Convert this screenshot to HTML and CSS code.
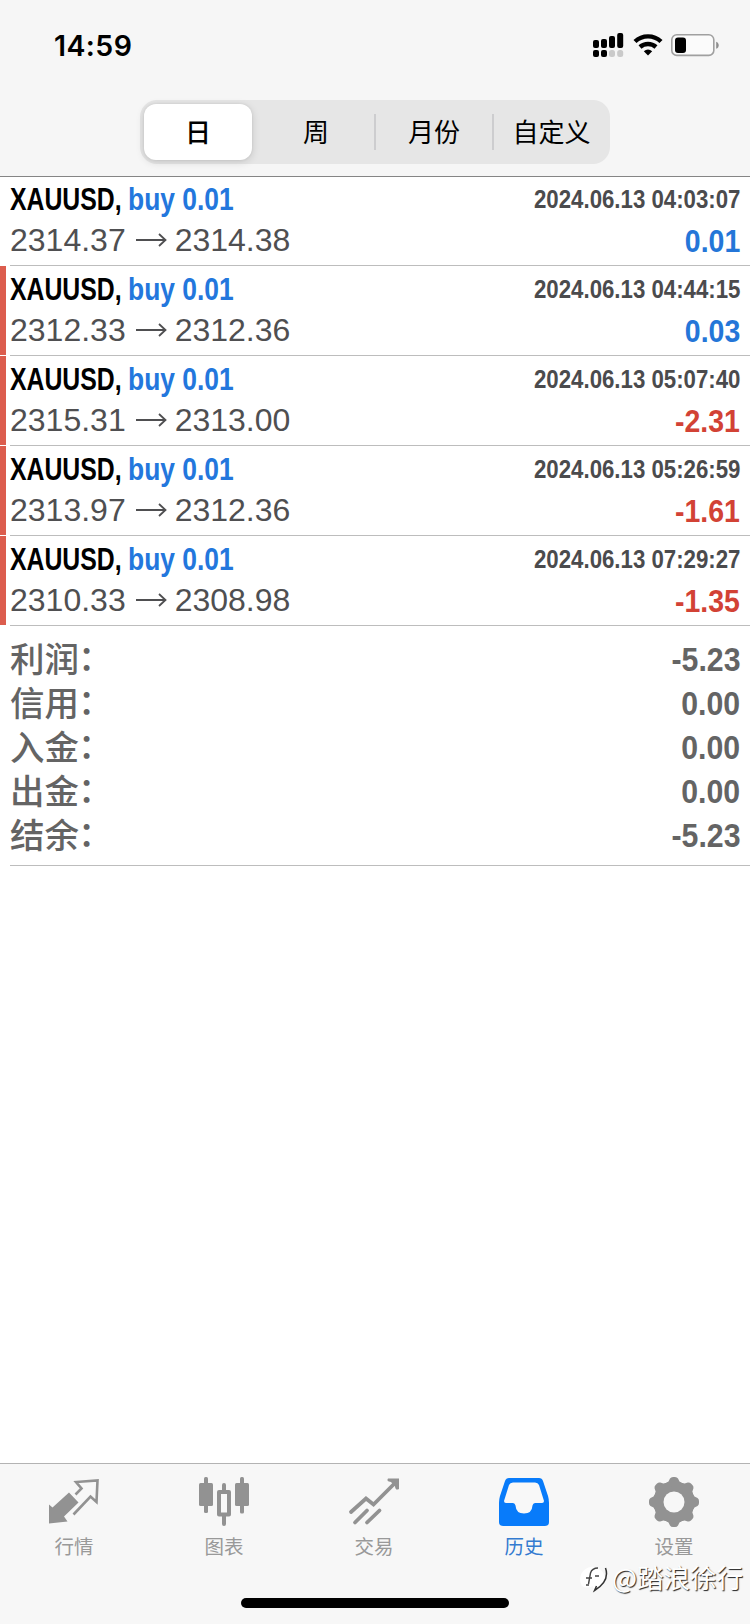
FILE: index.html
```html
<!DOCTYPE html>
<html lang="zh-CN">
<head>
<meta charset="utf-8">
<title>历史</title>
<link rel="stylesheet" href="styles.css">
</head>
<body>
<div class="app">
  <header class="header">
    <div class="status">
      <span class="time">14:59</span>
      <svg class="indicators" width="128" height="26" viewBox="0 0 128 26">
        <g fill="#000">
          <rect x="1" y="8" width="6" height="8" rx="2"/>
          <rect x="9" y="7" width="6" height="9" rx="2"/>
          <rect x="17" y="4" width="6" height="12" rx="2"/>
          <rect x="25.2" y="1" width="6" height="15" rx="2"/>
          <rect x="1" y="18" width="6" height="7" rx="2"/>
          <rect x="9" y="18" width="6" height="7" rx="2"/>
        </g>
        <g fill="#cacaca">
          <rect x="17" y="18" width="6" height="7" rx="2.5"/>
          <rect x="25.2" y="18" width="6" height="7" rx="2.5"/>
        </g>
        <g fill="none" stroke="#000" stroke-width="4.4">
          <path d="M43 9.5a19 19 0 0 1 26 0"/>
          <path d="M48 15a12 12 0 0 1 16 0"/>
        </g>
        <path d="M51.8 19.3a6.500 6.500 0 0 1 8.400 0L56 23.500z" fill="#000"/>
        <rect x="79.800" y="2.800" width="42" height="20.600" rx="5" fill="#fbfbfb" stroke="#a0a0a0" stroke-width="1.600"/>
        <rect x="83" y="5.400" width="11" height="15.600" rx="3" fill="#000"/>
        <path d="M124.200 9.800c3.400 1 3.400 6 0 7z" fill="#8e8e8e"/>
      </svg>
    </div>
    <nav class="segments">
      <span class="segment active">日</span>
      <span class="segment">周</span>
      <span class="segment divided">月份</span>
      <span class="segment divided">自定义</span>
    </nav>
  </header>

  <main class="content">
    <section class="deal plain">
      <div class="line"><span class="title"><b class="symbol">XAUUSD,</b><b class="side">buy 0.01</b></span><b class="date">2024.06.13 04:03:07</b></div>
      <div class="line second"><span class="prices">2314.37<svg class="arrow" viewBox="0 0 31 14"><path d="M0 7h29M23 1l6.5 6-6.5 6"/></svg>2314.38</span><b class="value gain">0.01</b></div>
    </section>
    <section class="deal">
      <div class="line"><span class="title"><b class="symbol">XAUUSD,</b><b class="side">buy 0.01</b></span><b class="date">2024.06.13 04:44:15</b></div>
      <div class="line second"><span class="prices">2312.33<svg class="arrow" viewBox="0 0 31 14"><path d="M0 7h29M23 1l6.5 6-6.5 6"/></svg>2312.36</span><b class="value gain">0.03</b></div>
    </section>
    <section class="deal">
      <div class="line"><span class="title"><b class="symbol">XAUUSD,</b><b class="side">buy 0.01</b></span><b class="date">2024.06.13 05:07:40</b></div>
      <div class="line second"><span class="prices">2315.31<svg class="arrow" viewBox="0 0 31 14"><path d="M0 7h29M23 1l6.5 6-6.5 6"/></svg>2313.00</span><b class="value loss">-2.31</b></div>
    </section>
    <section class="deal">
      <div class="line"><span class="title"><b class="symbol">XAUUSD,</b><b class="side">buy 0.01</b></span><b class="date">2024.06.13 05:26:59</b></div>
      <div class="line second"><span class="prices">2313.97<svg class="arrow" viewBox="0 0 31 14"><path d="M0 7h29M23 1l6.5 6-6.5 6"/></svg>2312.36</span><b class="value loss">-1.61</b></div>
    </section>
    <section class="deal">
      <div class="line"><span class="title"><b class="symbol">XAUUSD,</b><b class="side">buy 0.01</b></span><b class="date">2024.06.13 07:29:27</b></div>
      <div class="line second"><span class="prices">2310.33<svg class="arrow" viewBox="0 0 31 14"><path d="M0 7h29M23 1l6.5 6-6.5 6"/></svg>2308.98</span><b class="value loss">-1.35</b></div>
    </section>
    <section class="summary">
      <div class="total"><span class="label">利润<i class="colon">：</i></span><b class="amount">-5.23</b></div>
      <div class="total"><span class="label">信用<i class="colon">：</i></span><b class="amount">0.00</b></div>
      <div class="total"><span class="label">入金<i class="colon">：</i></span><b class="amount">0.00</b></div>
      <div class="total"><span class="label">出金<i class="colon">：</i></span><b class="amount">0.00</b></div>
      <div class="total"><span class="label">结余<i class="colon">：</i></span><b class="amount">-5.23</b></div>
    </section>
  </main>

  <footer class="footer">
    <nav class="tabs">
      <span class="tab">
        <svg class="icon" viewBox="0 0 50 50">
          <path d="M0 27.5 3.5 30.5 20 15.5 29.5 25.5 15 39.5 18.5 44.5 0 46.5z" fill="#929292"/>
          <path d="M26.5 17.5 32.5 11.5 27 5 48.5 3.5 47.5 25 41.5 19.5 24.5 37.5" fill="none" stroke="#929292" stroke-width="2.6"/>
        </svg>
        行情
      </span>
      <span class="tab">
        <svg class="icon" viewBox="0 0 50 50" fill="#929292">
          <rect x="5" y="0" width="4" height="36" rx="1.5"/><rect x="0" y="6" width="14" height="23" rx="1.5"/>
          <rect x="41" y="0" width="4" height="36.5" rx="1.5"/><rect x="36" y="6" width="14" height="23" rx="1.5"/>
          <path d="M23 14V8a2 2 0 0 1 4 0v6zM23 38h4v9a2 2 0 0 1-4 0z"/>
          <rect x="20" y="15" width="10" height="22.5" fill="#f9f9f9" stroke="#929292" stroke-width="4" stroke-linejoin="round"/>
        </svg>
        图表
      </span>
      <span class="tab">
        <svg class="icon" viewBox="0 0 50 50">
          <path d="M2 35 17 21.5 24.5 27.5 46 6M6 45.5 18 33.5M18 45.5 30.5 33.5" fill="none" stroke="#929292" stroke-width="3.8" stroke-linecap="round"/>
          <path d="M39 1.5H50V12Q46.5 14 46 9.5L42 5Q37 4.5 39 1.5z" fill="#929292"/>
        </svg>
        交易
      </span>
      <span class="tab current">
        <svg class="icon" viewBox="0 0 50 50">
          <path d="M10 1H40Q43 1 44 4L49 19Q50 22 50 26V45Q50 49 46 49H4Q0 49 0 45V26Q0 22 1 19L6 4Q7 1 10 1z" fill="#087bfa"/>
          <path d="M14 5.5H36Q39 5.5 40 8L45 24Q45 26 43 26H36Q34 26 33.5 28.5Q33 36.500 25 36.500Q17 36.500 16.500 28.500Q16 26 14 26H7Q5 26 5 24L10 8Q11 5.500 14 5.500z" fill="#f8f8f8"/>
        </svg>
        历史
      </span>
      <span class="tab">
        <svg class="icon" viewBox="0 0 50 50">
          <g fill="#929292">
            <circle cx="25" cy="25" r="20.5"/>
            <path id="tooth" d="M15.500 7 19.500 4.500 21 1.500Q22 0 24 0H26Q28 0 29 1.500L30.500 4.500 34.500 7V43L30.500 45.500 29 48.500Q28 50 26 50H24Q22 50 21 48.500L19.500 45.500 15.500 43z"/>
            <use href="#tooth" transform="rotate(45 25 25)"/>
            <use href="#tooth" transform="rotate(90 25 25)"/>
            <use href="#tooth" transform="rotate(135 25 25)"/>
          </g>
          <circle cx="25" cy="25" r="10.5" fill="#f7f7f7"/>
        </svg>
        设置
      </span>
    </nav>
    <div class="home"></div>
    <div class="watermark">
      <svg class="mark" width="28" height="32" viewBox="0 0 28 32">
        <path d="M2 25A12.500 12.500 0 1 1 25 17Q24 25 14 29L13 25Q7 28 2 25z" fill="#fff"/>
        <path d="M25.500 7Q30 20 14.500 29.500l2-4.500" fill="none" stroke="#333" stroke-width="1.500"/>
        <path d="M8.500 23 10.500 12Q12 7 18 7M6 17h6M15 15h4M6 24h3" fill="none" stroke="#444" stroke-width="1.400"/>
      </svg>
      <span>@踏浪徐行</span>
    </div>
  </footer>
</div>
</body>
</html>
```
FILE: styles.css
```css
* {
  box-sizing: border-box;
}

body {
  margin: 0;
  background: #fff;
  font-family: "Liberation Sans", "Noto Sans CJK SC", sans-serif;
}

.app {
  display: flex;
  flex-direction: column;
  width: 750px;
  height: 1624px;
  overflow: hidden;
}

.header {
  height: 177px;
  background: #f6f6f6;
  border-bottom: 1px solid #858585;
}

.status {
  display: flex;
  justify-content: space-between;
  height: 100px;
  padding: 29px 30px 0 54px;
}

.time {
  font: 600 28.5px/34px Inter, sans-serif;
  letter-spacing: 0.4px;
}

.indicators {
  margin-top: 3px;
}

.segments {
  display: grid;
  grid-template-columns: 117px 118px 118px 117px;
  width: 470px;
  height: 64px;
  margin-left: 140px;
  border-radius: 17px;
  background: #e6e6e6;
  font: 400 26px/62px "Noto Sans CJK SC", sans-serif;
  text-align: center;
}

.segment {
  display: block;
  height: 64px;
}

.segment.active {
  width: 108px;
  height: 56px;
  margin: 4px 0 0 4px;
  border-radius: 12px;
  background: #fff;
  box-shadow: 0 2px 8px rgba(0, 0, 0, 0.14), 0 0 3px rgba(0, 0, 0, 0.08);
  line-height: 54px;
  font-weight: 500;
}

.segment.divided {
  margin-left: -1px;
  padding-left: 1px;
  background: linear-gradient(#cdcdcf, #cdcdcf) 0 14px / 2px 36px no-repeat;
}

.content {
  flex: 1;
}

.deal {
  height: 90px;
  padding: 4px 10px 0;
  background:
    linear-gradient(#bdbdbd, #bdbdbd) 10px 100% / 740px 1px no-repeat,
    linear-gradient(#dc5d4e, #dc5d4e) 0 0 / 6px 89px no-repeat;
}

.deal.plain {
  height: 89px;
  padding-top: 3px;
  background: linear-gradient(#bdbdbd, #bdbdbd) 10px 100% / 740px 1px no-repeat;
}

.line {
  display: flex;
  justify-content: space-between;
  height: 40px;
  line-height: 38px;
  white-space: nowrap;
}

.title {
  display: flex;
  font-size: 32px;
}

.symbol {
  width: 118px;
  transform: scaleX(0.775);
  transform-origin: 0 50%;
}

.side {
  color: #2377dd;
  transform: scaleX(0.825);
  transform-origin: 0 50%;
}

.date {
  color: #4b4b4d;
  font-size: 26px;
  transform: scaleX(0.855);
  transform-origin: 100% 50%;
}

.prices {
  display: flex;
  align-items: center;
  height: 39px;
  color: #4f4f51;
  font-size: 32px;
}

.arrow {
  width: 31px;
  height: 14px;
  margin: 0 8px 0 10px;
  fill: none;
  stroke: #4f4f51;
  stroke-width: 1.8;
}

.value {
  padding-top: 2px;
  font-size: 32px;
  transform: scaleX(0.89);
  transform-origin: 100% 50%;
}

.gain {
  color: #2476d8;
}

.loss {
  color: #d24235;
}

.summary {
  height: 240px;
  padding: 11px 10px 0;
  background: linear-gradient(#bdbdbd, #bdbdbd) 10px 100% / 740px 1px no-repeat;
  color: #646464;
}

.total {
  display: flex;
  justify-content: space-between;
  height: 44px;
  line-height: 44px;
}

.label {
  display: flex;
  font: 500 34.5px/40px "Noto Sans CJK SC", sans-serif;
}

.colon {
  margin-left: -1px;
  font-style: normal;
  line-height: 36px;
}

.amount {
  font-size: 34px;
  transform: scaleX(0.89);
  transform-origin: 100% 50%;
}

.footer {
  position: relative;
  height: 161px;
  border-top: 1px solid #b3b3b3;
  background: #f7f7f7;
}

.tabs {
  display: grid;
  grid-template-columns: repeat(5, 150px);
  width: 748px;
  height: 134px;
  margin-left: -1px;
  padding-top: 13px;
}

.tab {
  display: flex;
  flex-direction: column;
  align-items: center;
  color: #999;
  font: 400 19.5px/28px "Noto Sans CJK SC", sans-serif;
}

.current {
  color: #347bd0;
}

.icon {
  width: 50px;
  height: 50px;
  margin-bottom: 5px;
  overflow: visible;
}

.home {
  width: 268px;
  height: 10px;
  margin: 0 auto;
  border-radius: 5px;
  background: #000;
}

.watermark {
  position: absolute;
  right: 7px;
  bottom: 30px;
  display: flex;
  align-items: center;
  color: #fff;
  font: 400 26.5px/34px "Noto Sans CJK SC", sans-serif;
  text-shadow: 1px 1px 1px #222;
}

.mark {
  margin-right: 4px;
}
```
